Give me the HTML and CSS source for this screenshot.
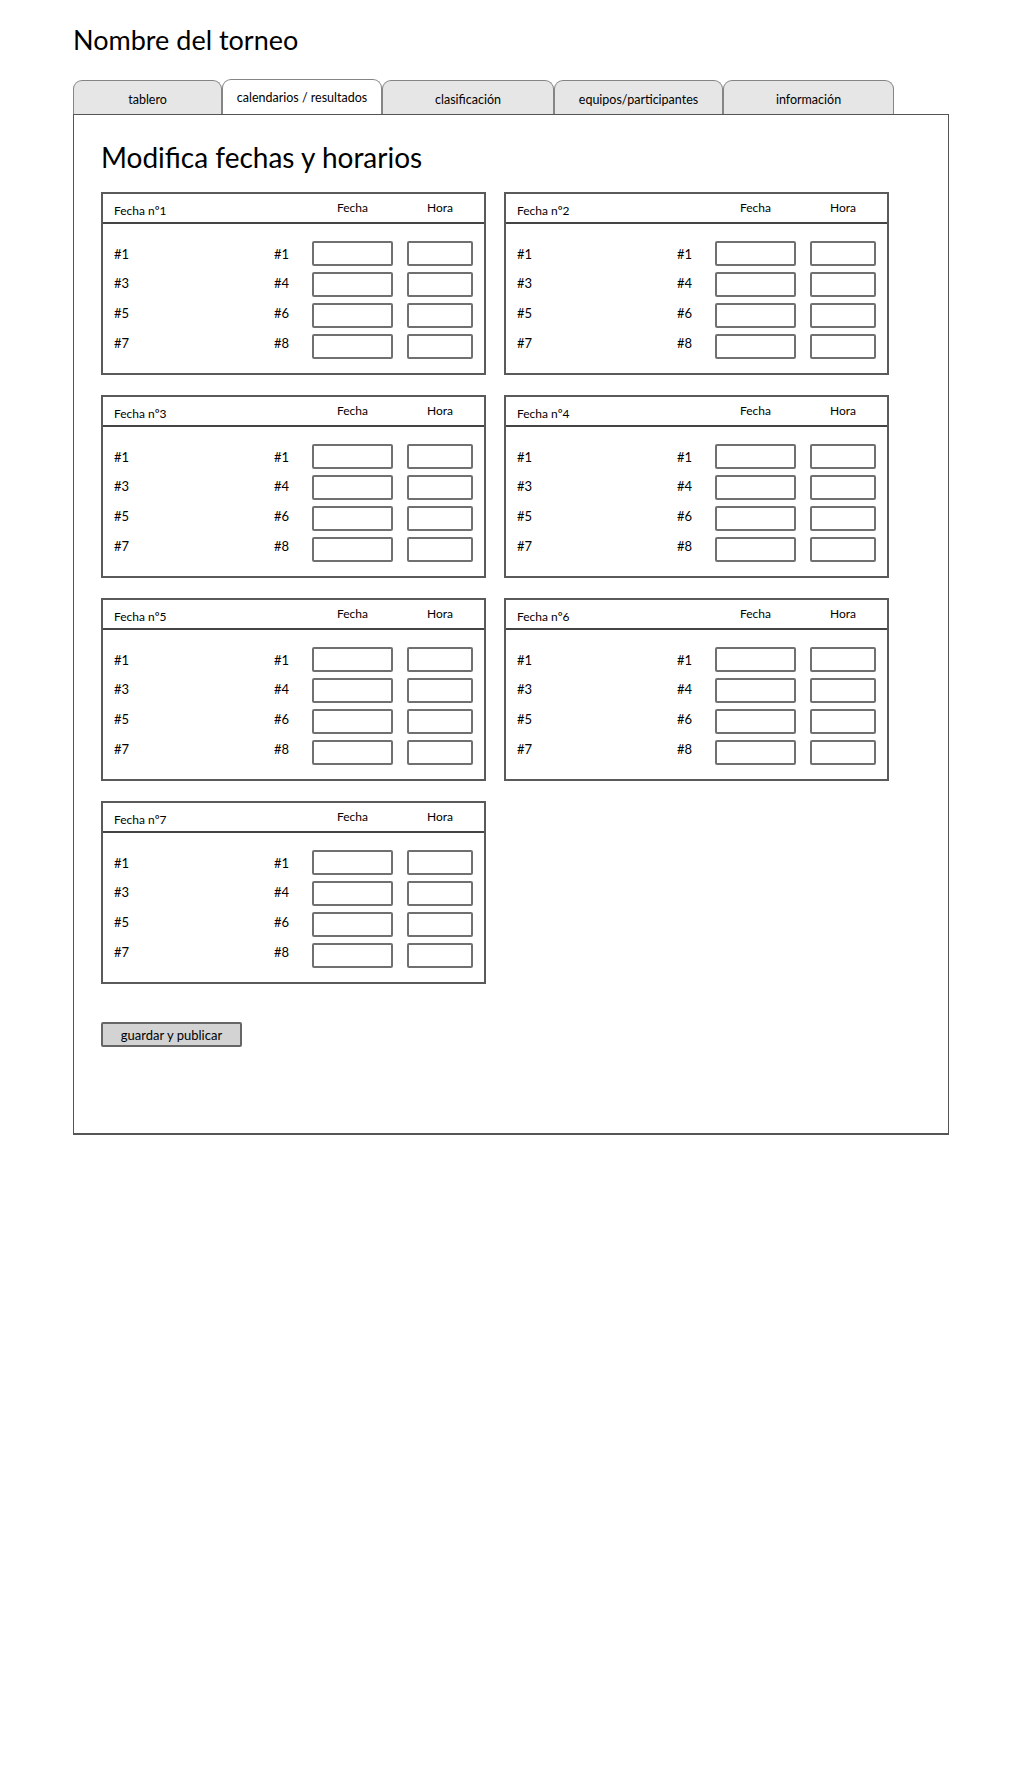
FILE: index.html
```html
<!DOCTYPE html>
<html lang="es">

<head>
    <meta charset="UTF-8">
    <meta name="viewport" content="width=device-width, initial-scale=1.0">
    <title>Nombre del torneo</title>
    <link rel="stylesheet" href="styles.css">
</head>

<body>
    <div class="page">
        <h1 class="site-title">Nombre del torneo</h1>

        <nav class="tabs">
            <div class="tab tab-1">tablero</div>
            <div class="tab tab-2 active">calendarios / resultados</div>
            <div class="tab tab-3">clasificación</div>
            <div class="tab tab-4">equipos/participantes</div>
            <div class="tab tab-5">información</div>
        </nav>

        <main class="panel">
            <h2>Modifica fechas y horarios</h2>

            <div class="rounds">
                <section class="round">
                    <div class="round-head">
                        <span class="round-name">Fecha nº1</span>
                        <span class="col-label">Fecha</span>
                        <span class="col-label">Hora</span>
                    </div>
                    <div class="round-body">
                        <span>#1</span><span>#1</span><input type="text" class="in-date"><input type="text" class="in-time">
                        <span>#3</span><span>#4</span><input type="text" class="in-date"><input type="text" class="in-time">
                        <span>#5</span><span>#6</span><input type="text" class="in-date"><input type="text" class="in-time">
                        <span>#7</span><span>#8</span><input type="text" class="in-date"><input type="text" class="in-time">
                    </div>
                </section>

                <section class="round">
                    <div class="round-head">
                        <span class="round-name">Fecha nº2</span>
                        <span class="col-label">Fecha</span>
                        <span class="col-label">Hora</span>
                    </div>
                    <div class="round-body">
                        <span>#1</span><span>#1</span><input type="text" class="in-date"><input type="text" class="in-time">
                        <span>#3</span><span>#4</span><input type="text" class="in-date"><input type="text" class="in-time">
                        <span>#5</span><span>#6</span><input type="text" class="in-date"><input type="text" class="in-time">
                        <span>#7</span><span>#8</span><input type="text" class="in-date"><input type="text" class="in-time">
                    </div>
                </section>

                <section class="round">
                    <div class="round-head">
                        <span class="round-name">Fecha nº3</span>
                        <span class="col-label">Fecha</span>
                        <span class="col-label">Hora</span>
                    </div>
                    <div class="round-body">
                        <span>#1</span><span>#1</span><input type="text" class="in-date"><input type="text" class="in-time">
                        <span>#3</span><span>#4</span><input type="text" class="in-date"><input type="text" class="in-time">
                        <span>#5</span><span>#6</span><input type="text" class="in-date"><input type="text" class="in-time">
                        <span>#7</span><span>#8</span><input type="text" class="in-date"><input type="text" class="in-time">
                    </div>
                </section>

                <section class="round">
                    <div class="round-head">
                        <span class="round-name">Fecha nº4</span>
                        <span class="col-label">Fecha</span>
                        <span class="col-label">Hora</span>
                    </div>
                    <div class="round-body">
                        <span>#1</span><span>#1</span><input type="text" class="in-date"><input type="text" class="in-time">
                        <span>#3</span><span>#4</span><input type="text" class="in-date"><input type="text" class="in-time">
                        <span>#5</span><span>#6</span><input type="text" class="in-date"><input type="text" class="in-time">
                        <span>#7</span><span>#8</span><input type="text" class="in-date"><input type="text" class="in-time">
                    </div>
                </section>

                <section class="round">
                    <div class="round-head">
                        <span class="round-name">Fecha nº5</span>
                        <span class="col-label">Fecha</span>
                        <span class="col-label">Hora</span>
                    </div>
                    <div class="round-body">
                        <span>#1</span><span>#1</span><input type="text" class="in-date"><input type="text" class="in-time">
                        <span>#3</span><span>#4</span><input type="text" class="in-date"><input type="text" class="in-time">
                        <span>#5</span><span>#6</span><input type="text" class="in-date"><input type="text" class="in-time">
                        <span>#7</span><span>#8</span><input type="text" class="in-date"><input type="text" class="in-time">
                    </div>
                </section>

                <section class="round">
                    <div class="round-head">
                        <span class="round-name">Fecha nº6</span>
                        <span class="col-label">Fecha</span>
                        <span class="col-label">Hora</span>
                    </div>
                    <div class="round-body">
                        <span>#1</span><span>#1</span><input type="text" class="in-date"><input type="text" class="in-time">
                        <span>#3</span><span>#4</span><input type="text" class="in-date"><input type="text" class="in-time">
                        <span>#5</span><span>#6</span><input type="text" class="in-date"><input type="text" class="in-time">
                        <span>#7</span><span>#8</span><input type="text" class="in-date"><input type="text" class="in-time">
                    </div>
                </section>

                <section class="round">
                    <div class="round-head">
                        <span class="round-name">Fecha nº7</span>
                        <span class="col-label">Fecha</span>
                        <span class="col-label">Hora</span>
                    </div>
                    <div class="round-body">
                        <span>#1</span><span>#1</span><input type="text" class="in-date"><input type="text" class="in-time">
                        <span>#3</span><span>#4</span><input type="text" class="in-date"><input type="text" class="in-time">
                        <span>#5</span><span>#6</span><input type="text" class="in-date"><input type="text" class="in-time">
                        <span>#7</span><span>#8</span><input type="text" class="in-date"><input type="text" class="in-time">
                    </div>
                </section>
            </div>

            <button type="button" class="publish">guardar y publicar</button>
        </main>
    </div>
</body>

</html>
```

FILE: styles.css
```css
/* General */
body {
    margin: 0;
    font-family: "Comic Sans MS", "Lato", sans-serif;
    background-color: #FFFFFF;
    color: #000000;
}

.page {
    width: 876px;
    padding-left: 73px;
}

.site-title {
    margin: 0;
    padding-top: 24px;
    font-size: 27px;
    font-weight: normal;
    line-height: 32px;
}

/* Tabs */
.tabs {
    display: flex;
    align-items: flex-end;
    height: 35px;
    margin-top: 23px;
}

.tab {
    box-sizing: border-box;
    height: 34px;
    padding-top: 11px;
    border: 1px solid #858585;
    border-bottom: none;
    border-radius: 9px 9px 0 0;
    background-color: #E6E6E6;
    font-size: 12.5px;
    text-align: center;
    white-space: nowrap;
}

.tab.active {
    height: 35px;
    padding-top: 10px;
    background-color: #FFFFFF;
}

.tab-1 { width: 149px; }
.tab-2 { width: 160px; }
.tab-3 { width: 172px; }
.tab-4 { width: 169px; }
.tab-5 { width: 171px; }

/* Main panel */
.panel {
    box-sizing: border-box;
    display: block;
    width: 876px;
    height: 1021px;
    padding: 25px 27px 0;
    border: 1px solid #555555;
    border-bottom-width: 2px;
}

.panel h2 {
    margin: 0;
    font-size: 28px;
    font-weight: normal;
    line-height: 34px;
}

.rounds {
    display: grid;
    grid-template-columns: 385px 385px;
    column-gap: 18px;
    row-gap: 20px;
    margin-top: 18px;
}

/* Round card */
.round {
    box-sizing: border-box;
    height: 183px;
    border: 2px solid #5A5A5A;
}

.round-head,
.round-body {
    display: grid;
    grid-template-columns: 146px 24px 81px 66px;
    column-gap: 14px;
    padding: 0 11px;
}

.round-head {
    height: 28px;
    align-items: center;
    border-bottom: 2px solid #444444;
    font-size: 12px;
}

.round-name {
    grid-column: 1 / 3;
    padding-top: 5px;
}

.col-label {
    text-align: center;
    padding-bottom: 2px;
}

.round-body {
    grid-auto-rows: 25px;
    row-gap: 6px;
    align-items: center;
    padding-top: 17px;
    font-size: 13px;
}

/* the hand-drawn labels drift up a little row by row */
.round-body span:nth-of-type(3),
.round-body span:nth-of-type(4) {
    margin-bottom: 3px;
}

.round-body span:nth-of-type(5),
.round-body span:nth-of-type(6) {
    margin-bottom: 5px;
}

.round-body span:nth-of-type(7),
.round-body span:nth-of-type(8) {
    margin-bottom: 8px;
}

.round-body input {
    box-sizing: border-box;
    width: 100%;
    height: 25px;
    margin: 0;
    border: 2px solid #707070;
    border-radius: 2px;
    background-color: #FFFFFF;
}

/* Button */
.publish {
    display: block;
    box-sizing: border-box;
    width: 141px;
    height: 25px;
    margin-top: 38px;
    padding: 0;
    font-family: inherit;
    font-size: 13px;
    color: #000000;
    background-color: #D3D3D3;
    border: 2px solid #666666;
    border-radius: 2px;
}
```
